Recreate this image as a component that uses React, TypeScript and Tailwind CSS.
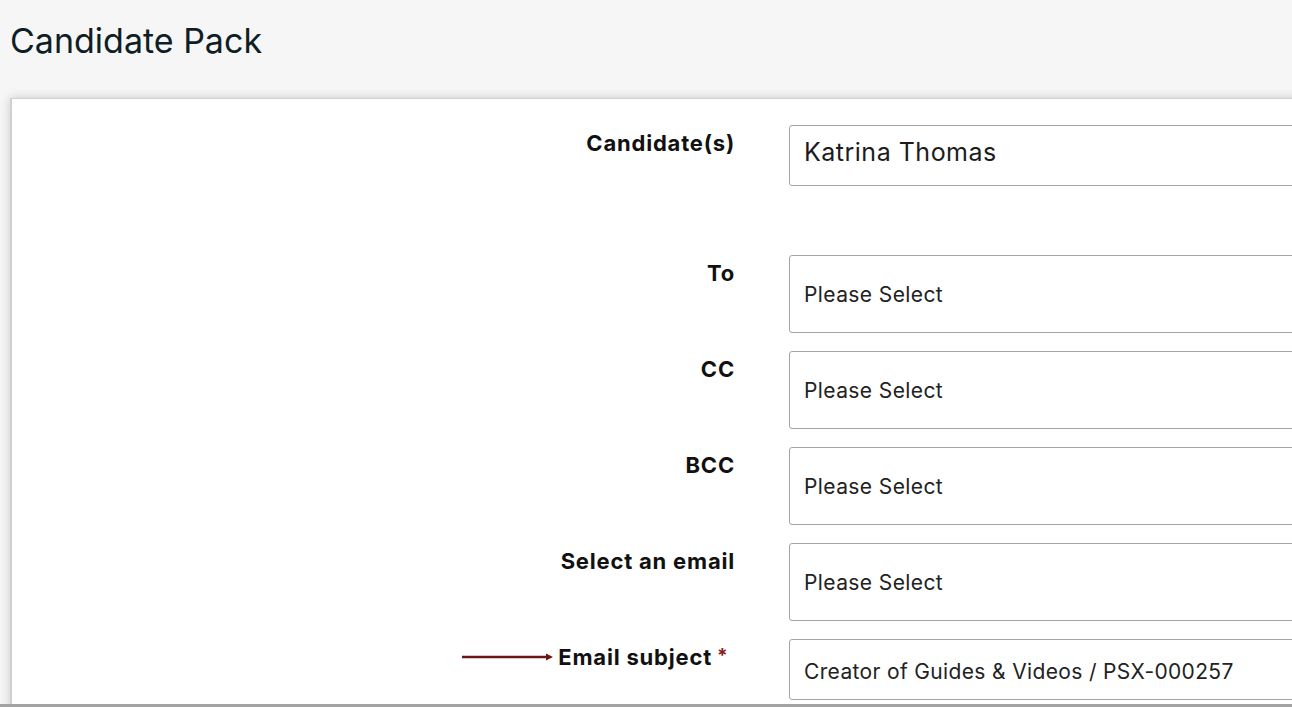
import React from 'react';

const font = { fontFamily: "Inter, 'Open Sans', sans-serif" };

interface FieldProps {
  label: string;
  value: string;
  kind?: 'name' | 'select' | 'subject';
  required?: boolean;
  arrow?: boolean;
  className?: string;
}

function Field({ label, value, kind = 'select', required, arrow, className = '' }: FieldProps) {
  const box =
    kind === 'select' ? 'h-[78px] pt-[2px]' : kind === 'name' ? 'h-[61px] pb-[6px]' : 'h-[61px] pt-[4px]';
  const text =
    kind === 'name'
      ? 'text-[25px] tracking-[0.5px] text-[#1c1c1c]'
      : kind === 'select'
        ? 'text-[21px] tracking-[0.4px] text-[#222]'
        : 'text-[21px] tracking-[0.35px] text-[#222]';
  return (
    <div className={`flex items-start ${className}`}>
      <div className="w-[723px] shrink-0 flex justify-end items-center h-[36px]">
        {arrow && (
          <svg width="92" height="10" viewBox="0 0 92 10" className="mr-[4px]">
            <line x1="0" y1="5" x2="85" y2="5" stroke="#6a1519" strokeWidth="2.6" />
            <path d="M84 1.5 L91 5 L84 8.5 Z" fill="#6a1519" />
          </svg>
        )}
        <span className="text-[22px] font-bold text-[#111] tracking-[0.8px]">{label}</span>
        {required && <span className="text-[19px] font-bold text-[#8b1c22] ml-[5px] -mt-[2px] w-[18px]">*</span>}
      </div>
      <div
        className={`ml-[54px] w-[600px] shrink-0 bg-white border border-[#a5a5a5] rounded-[3px] flex items-center pl-[14px] ${box}`}
      >
        <span className={text}>{value}</span>
      </div>
    </div>
  );
}

export default function App() {
  return (
    <div className="h-[707px] w-[1292px] overflow-hidden bg-[#f6f6f6] border-b-[3px] border-[#a3a3a3]" style={font}>
      <div className="h-[98px] pl-[10px] pt-[19px]">
        <h1 className="text-[34px] text-[#0f1d24] font-normal leading-[44px]">Candidate Pack</h1>
      </div>
      <div className="ml-[10px] w-[1400px] h-[700px] bg-white border-l-2 border-t border-[#d0d0d0] shadow-[0_0_10px_rgba(0,0,0,0.18)] pt-[26px]">
        <Field label="Candidate(s)" value="Katrina Thomas" kind="name" />
        <Field label="To" value="Please Select" className="mt-[69px]" />
        <Field label="CC" value="Please Select" className="mt-[18px]" />
        <Field label="BCC" value="Please Select" className="mt-[18px]" />
        <Field label="Select an email" value="Please Select" className="mt-[18px]" />
        <Field
          label="Email subject"
          value="Creator of Guides & Videos / PSX-000257"
          kind="subject"
          required
          arrow
          className="mt-[18px]"
        />
      </div>
    </div>
  );
}
